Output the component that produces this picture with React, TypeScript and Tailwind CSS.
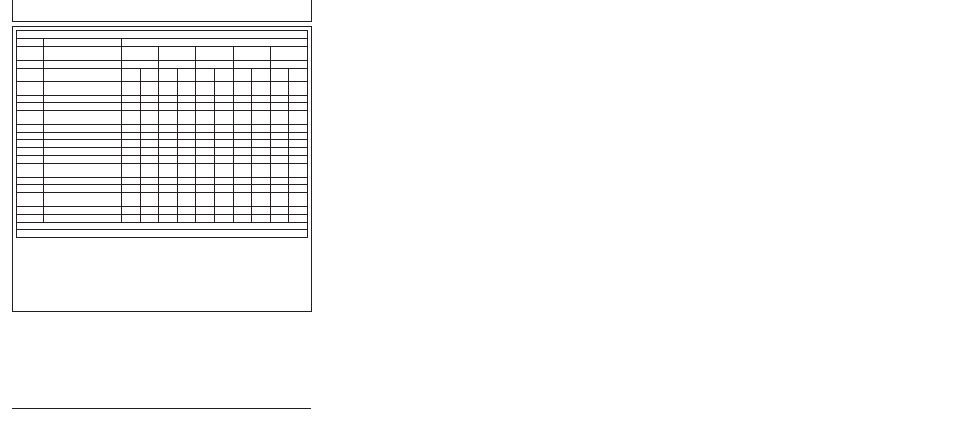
const line = "bg-[#231f20]";

// heights of the body rows, top to bottom
const bodyRows = [
  "h-[12px]",
  "h-[13px]",
  "h-[6px]",
  "h-[7px]",
  "h-[13px]",
  "h-[7px]",
  "h-[6px]",
  "h-[7px]",
  "h-[7px]",
  "h-[7px]",
  "h-[13px]",
  "h-[6px]",
  "h-[7px]",
  "h-[13px]",
  "h-[7px]",
  "h-[7px]",
];

const groups = [0, 1, 2, 3, 4];
const subCols = [0, 1, 2, 3, 4, 5, 6, 7, 8, 9];

function FormTable() {
  return (
    <div
      className={`grid grid-cols-[26px_77px_repeat(10,minmax(0,1fr))] gap-px p-px ${line}`}
    >
      {/* title row */}
      <div className="col-span-12 h-[7px] bg-white" />

      {/* header rows */}
      <div className="h-[7px] bg-white" />
      <div className="h-[7px] bg-white" />
      <div className="col-span-10 h-[7px] bg-white" />

      <div className="h-[13px] bg-white" />
      <div className="h-[13px] bg-white" />
      {groups.map((g) => (
        <div key={`g1-${g}`} className="col-span-2 h-[13px] bg-white" />
      ))}

      <div className="h-[7px] bg-white" />
      <div className="h-[7px] bg-white" />
      {groups.map((g) => (
        <div key={`g2-${g}`} className="col-span-2 h-[7px] bg-white" />
      ))}

      {/* body */}
      {bodyRows.map((h, r) => (
        <div key={`r-${r}`} className="contents">
          <div className={`bg-white ${h}`} />
          <div className={`bg-white ${h}`} />
          {subCols.map((c) => (
            <div key={c} className={`bg-white ${h}`} />
          ))}
        </div>
      ))}

      {/* totals / notes */}
      <div className="col-span-12 h-[6px] bg-white" />
      <div className="col-span-12 h-[7px] bg-white" />
    </div>
  );
}

export default function App() {
  return (
    <div className="min-h-[447px] w-full bg-white font-['Liberation_Sans',sans-serif]">
      <div className="ml-[12px] w-[300px]">
        {/* tail of the previous box */}
        <div className="h-[22px] border-x border-b border-[#231f20]" />

        <div className="mt-[4px] h-[286px] border border-[#231f20] p-[3px]">
          <FormTable />
        </div>

        <div className="mt-[96px] h-px w-[299px] bg-[#231f20]" />
      </div>
    </div>
  );
}
